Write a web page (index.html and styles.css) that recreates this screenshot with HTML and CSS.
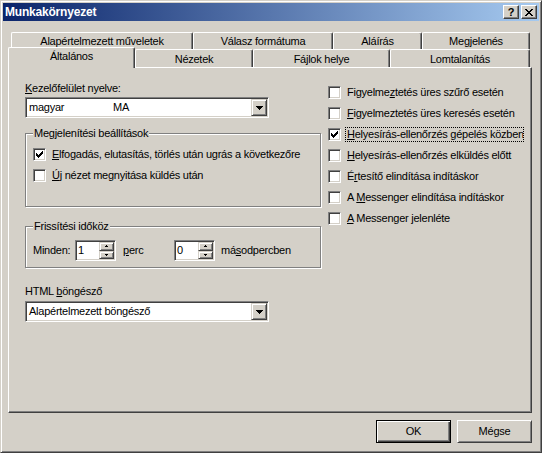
FILE: index.html
```html
<!DOCTYPE html>
<html lang="hu">
<head>
<meta charset="utf-8">
<title>Munkakörnyezet</title>
<link rel="stylesheet" href="styles.css">
</head>
<body>
<div class="window">
  <div class="titlebar">
    <span class="title">Munkakörnyezet</span>
    <div class="tb-buttons">
      <span class="tb-btn tb-help">?</span>
      <span class="tb-btn tb-close"><svg width="8" height="7" viewBox="0 0 8 7"><path d="M0 0h2v1h-2z M6 0h2v1h-2z M1 1h2v1h-2z M5 1h2v1h-2z M2 2h4v1h-4z M3 3h2v1h-2z M2 4h4v1h-4z M1 5h2v1h-2z M5 5h2v1h-2z M0 6h2v1h-2z M6 6h2v1h-2z"/></svg></span>
    </div>
  </div>
  <div class="dialog">
    <div class="tabs">
      <div class="tab-row row-back">
        <div class="tab t-alap">Alapértelmezett műveletek</div>
        <div class="tab t-valasz">Válasz formátuma</div>
        <div class="tab t-alairas">Aláírás</div>
        <div class="tab t-megj">Megjelenés</div>
      </div>
      <div class="tab-row row-front">
        <div class="tab tab-active t-alt">Általános</div>
        <div class="tab t-nez">Nézetek</div>
        <div class="tab t-faj">Fájlok helye</div>
        <div class="tab t-lom">Lomtalanítás</div>
      </div>
    </div>
    <div class="panel">
      <div class="col-left">
        <div class="lbl"><u>K</u>ezelőfelület nyelve:</div>
        <div class="combo">
          <div class="combo-text"><span class="combo-lang">magyar</span><span>MA</span></div>
          <div class="combo-btn"><svg width="7" height="4" viewBox="0 0 7 4"><path d="M0 0h7v1h-7z M1 1h5v1h-5z M2 2h3v1h-3z M3 3h1v1h-1z"/></svg></div>
        </div>
        <fieldset class="group group-view">
          <legend>Megjelenítési beállítások</legend>
          <div class="cb-row">
            <span class="cb"><svg width="7" height="7" viewBox="0 0 7 7"><path d="M0 2h1v3h-1z M1 3h1v3h-1z M2 4h1v3h-1z M3 3h1v3h-1z M4 2h1v3h-1z M5 1h1v3h-1z M6 0h1v3h-1z"/></svg></span>
            <span class="cb-label"><u>E</u>lfogadás, elutasítás, törlés után ugrás a következőre</span>
          </div>
          <div class="cb-row">
            <span class="cb"></span>
            <span class="cb-label"><u>Ú</u>j nézet megnyitása küldés után</span>
          </div>
        </fieldset>
        <fieldset class="group group-refresh">
          <legend>Frissítési időköz</legend>
          <div class="spin-row">
            <span class="spin-lbl">Minden:</span>
            <div class="spin">
              <span class="spin-text">1</span>
              <div class="spin-btns">
                <span class="spin-btn"><svg width="3" height="2" viewBox="0 0 3 2"><path d="M1 0h1v1h-1z M0 1h3v1h-3z"/></svg></span>
                <span class="spin-btn"><svg width="3" height="2" viewBox="0 0 3 2"><path d="M0 0h3v1h-3z M1 1h1v1h-1z"/></svg></span>
              </div>
            </div>
            <span class="spin-unit unit-min"><u>p</u>erc</span>
            <div class="spin">
              <span class="spin-text">0</span>
              <div class="spin-btns">
                <span class="spin-btn"><svg width="3" height="2" viewBox="0 0 3 2"><path d="M1 0h1v1h-1z M0 1h3v1h-3z"/></svg></span>
                <span class="spin-btn"><svg width="3" height="2" viewBox="0 0 3 2"><path d="M0 0h3v1h-3z M1 1h1v1h-1z"/></svg></span>
              </div>
            </div>
            <span class="spin-unit">má<u>s</u>odpercben</span>
          </div>
        </fieldset>
        <div class="lbl lbl-html">HTML <u>b</u>öngésző</div>
        <div class="combo combo-browser">
          <div class="combo-text">Alapértelmezett böngésző</div>
          <div class="combo-btn"><svg width="7" height="4" viewBox="0 0 7 4"><path d="M0 0h7v1h-7z M1 1h5v1h-5z M2 2h3v1h-3z M3 3h1v1h-1z"/></svg></div>
        </div>
      </div>
      <div class="col-right">
        <div class="cb-row">
          <span class="cb"></span>
          <span class="cb-label">Figyelme<u>z</u>tetés üres szűrő esetén</span>
        </div>
        <div class="cb-row">
          <span class="cb"></span>
          <span class="cb-label"><u>F</u>igyelmeztetés üres keresés esetén</span>
        </div>
        <div class="cb-row">
          <span class="cb"><svg width="7" height="7" viewBox="0 0 7 7"><path d="M0 2h1v3h-1z M1 3h1v3h-1z M2 4h1v3h-1z M3 3h1v3h-1z M4 2h1v3h-1z M5 1h1v3h-1z M6 0h1v3h-1z"/></svg></span>
          <span class="cb-label cb-focus"><u>H</u>elyesírás-ellenőrzés gépelés közben</span>
        </div>
        <div class="cb-row">
          <span class="cb"></span>
          <span class="cb-label"><u>H</u>elyesírás-ellenőrzés elküldés előtt</span>
        </div>
        <div class="cb-row">
          <span class="cb"></span>
          <span class="cb-label">É<u>r</u>tesítő elindítása indításkor</span>
        </div>
        <div class="cb-row">
          <span class="cb"></span>
          <span class="cb-label">A <u>M</u>essenger elindítása indításkor</span>
        </div>
        <div class="cb-row">
          <span class="cb"></span>
          <span class="cb-label"><u>A</u> Messenger jelenléte</span>
        </div>
      </div>
    </div>
    <div class="footer">
      <div class="btn btn-default">OK</div>
      <div class="btn">Mégse</div>
    </div>
  </div>
</div>
</body>
</html>
```
FILE: styles.css
```css
* { box-sizing: border-box; }
html, body { margin: 0; padding: 0; }
body {
  width: 542px;
  height: 453px;
  overflow: hidden;
  background: #D4D0C8;
  font-family: "Liberation Sans", Arial, sans-serif;
  font-size: 11px;
  letter-spacing: -0.25px;
  color: #000;
}
u { text-decoration: underline; text-underline-offset: 1px; }

.window {
  width: 542px;
  height: 453px;
  background: #D4D0C8;
  border: 1px solid;
  border-color: #D4D0C8 #404040 #404040 #D4D0C8;
  box-shadow: inset 1px 1px 0 #fff, inset -1px -1px 0 #808080;
  padding: 2px;
  display: flex;
  flex-direction: column;
}

/* title bar */
.titlebar {
  height: 18px;
  flex: none;
  display: flex;
  align-items: center;
  padding: 0 2px;
  background: linear-gradient(to right, #0A246A, #A6CAF0);
}
.title {
  color: #fff;
  font-weight: bold;
  font-size: 12px;
  letter-spacing: -0.2px;
  line-height: 14px;
}
.tb-buttons { margin-left: auto; display: flex; gap: 2px; }
.tb-btn {
  width: 16px;
  height: 14px;
  display: flex;
  align-items: center;
  justify-content: center;
  background: #D4D0C8;
  border: 1px solid;
  border-color: #fff #404040 #404040 #fff;
  box-shadow: inset -1px -1px 0 #808080;
  font-weight: bold;
  font-size: 11px;
  line-height: 12px;
  letter-spacing: 0;
}
.tb-btn svg { display: block; fill: #000; }

/* dialog body */
.dialog {
  flex: 1;
  display: flex;
  flex-direction: column;
  padding: 0 7px 0 5px;
}
.tabs { display: flex; flex-direction: column; margin-top: 11px; }
.tab-row { display: flex; }
.row-back { padding-left: 3px; height: 17px; }
.row-front { height: 18px; align-items: flex-end; }
.tab {
  height: 100%;
  border-top: 1px solid #fff;
  border-left: 1px solid #fff;
  border-right: 1px solid #404040;
  box-shadow: inset -1px 0 0 #808080;
  border-radius: 2px 2px 0 0;
  text-align: center;
  white-space: nowrap;
  line-height: 13px;
  background: #D4D0C8;
}
.row-back .tab { padding-top: 2px; }
.row-front .tab { height: 18px; padding-top: 3px; }
.row-front .tab-active {
  height: 21px;
  margin-top: -2px;
  margin-bottom: -1px;
  padding-top: 2px;
  position: relative;
  z-index: 1;
}
.t-alap { width: 182px; }
.t-valasz { width: 140px; }
.t-alairas { width: 89px; }
.t-megj { width: 108px; }
.t-alt { width: 127px; }
.t-nez { width: 118px; }
.t-faj { width: 137px; }
.t-lom { width: 140px; }

.panel {
  height: 346px;
  flex: none;
  background: #D4D0C8;
  border: 1px solid;
  border-color: #fff #404040 #404040 #fff;
  box-shadow: inset -1px -1px 0 #808080;
  display: grid;
  grid-template-columns: 296px 1fr;
  column-gap: 7px;
  align-items: start;
  padding: 14px 0 0 16px;
}

.col-left { display: flex; flex-direction: column; }
.lbl { line-height: 13px; white-space: nowrap; }
.lbl-html { margin-top: 17px; }

.combo {
  width: 244px;
  height: 21px;
  margin-top: 2px;
  display: flex;
  background: #fff;
  border: 1px solid;
  border-color: #808080 #fff #fff #808080;
  box-shadow: inset 1px 1px 0 #404040, inset -1px -1px 0 #D4D0C8;
  padding: 1px;
}
.combo-browser { margin-top: 3px; }
.combo-text {
  flex: 1;
  display: flex;
  align-items: center;
  padding-left: 2px;
  white-space: nowrap;
  line-height: 13px;
}
.combo-lang { width: 84px; }
.combo-btn {
  width: 16px;
  height: 17px;
  display: flex;
  align-items: center;
  justify-content: center;
  background: #D4D0C8;
  border: 1px solid;
  border-color: #D4D0C8 #404040 #404040 #D4D0C8;
  box-shadow: inset 1px 1px 0 #fff, inset -1px -1px 0 #808080;
}
.combo-btn svg { display: block; fill: #000; margin-top: 1px; }

/* group boxes */
.group {
  margin: 0;
  min-width: 0;
  width: 296px;
  border: 1px solid #808080;
  box-shadow: 1px 1px 0 #fff, inset 1px 1px 0 #fff;
  padding: 4px 7px 20px;
}
.group legend {
  padding: 0 1px;
  line-height: 13px;
  background: #D4D0C8;
  white-space: nowrap;
}
.group-view { margin-top: 9px; }
.group-refresh { margin-top: 13px; padding: 7px 7px 6px; }

/* checkboxes */
.cb-row { display: flex; align-items: center; height: 21px; }
.cb {
  flex: none;
  width: 13px;
  height: 13px;
  background: #fff;
  border: 1px solid;
  border-color: #808080 #fff #fff #808080;
  box-shadow: inset 1px 1px 0 #404040, inset -1px -1px 0 #D4D0C8;
  padding: 2px;
}
.cb svg { display: block; fill: #000; }
.cb-label {
  margin-left: 4px;
  border: 1px solid transparent;
  padding: 0 1px;
  line-height: 13px;
  white-space: nowrap;
}
.cb-focus {
  width: 179px;
  overflow: hidden;
  border: 1px dotted #000;
}

/* spin boxes */
.spin-row { display: flex; align-items: center; height: 21px; }
.spin-lbl { width: 42px; line-height: 13px; white-space: nowrap; }
.spin {
  width: 41px;
  height: 21px;
  display: flex;
  background: #fff;
  border: 1px solid;
  border-color: #808080 #fff #fff #808080;
  box-shadow: inset 1px 1px 0 #404040, inset -1px -1px 0 #D4D0C8;
  padding: 1px;
}
.spin-text { flex: 1; padding-left: 1px; display: flex; align-items: center; line-height: 13px; }
.spin-btns { width: 15px; display: flex; flex-direction: column; }
.spin-btn {
  flex: 1;
  display: flex;
  align-items: center;
  justify-content: center;
  background: #D4D0C8;
  border: 1px solid;
  border-color: #D4D0C8 #404040 #404040 #D4D0C8;
  box-shadow: inset 1px 1px 0 #fff, inset -1px -1px 0 #808080;
}
.spin-btn svg { display: block; fill: #000; }
.spin-unit { margin-left: 6px; line-height: 13px; white-space: nowrap; }
.unit-min { margin-left: 7px; width: 51px; }

.col-right { display: flex; flex-direction: column; }

/* footer buttons */
.footer {
  display: flex;
  justify-content: flex-end;
  gap: 6px;
  margin-top: 7px;
}
.btn {
  width: 75px;
  height: 23px;
  display: flex;
  align-items: center;
  justify-content: center;
  background: #D4D0C8;
  border: 1px solid;
  border-color: #fff #404040 #404040 #fff;
  box-shadow: inset 1px 1px 0 #D4D0C8, inset -1px -1px 0 #808080;
  line-height: 13px;
}
.btn-default {
  border: 1px solid #000;
  box-shadow: inset 1px 1px 0 #fff, inset -1px -1px 0 #404040, inset -2px -2px 0 #808080;
}
```
